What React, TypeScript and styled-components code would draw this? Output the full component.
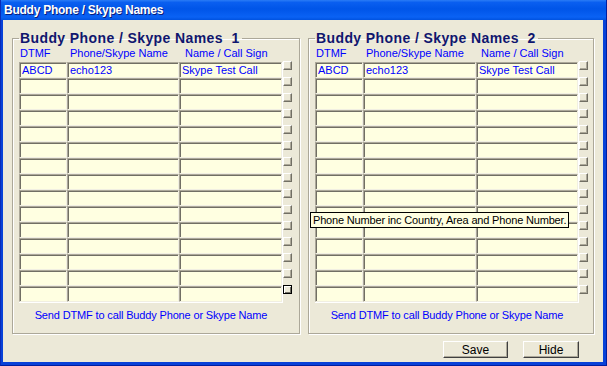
import React from 'react';
import styled, { createGlobalStyle } from 'styled-components';

const GlobalStyle = createGlobalStyle`
  html, body {
    margin: 0;
    padding: 0;
    background: #ece9d8;
  }
  body {
    font-family: "Liberation Sans", Arial, sans-serif;
  }
`;

const Window = styled.div`
  position: relative;
  width: 607px;
  height: 366px;
  box-sizing: border-box;
  display: flex;
  flex-direction: column;
  background: #0841d8;
  border-left: 1px solid #0a2bb8;
  border-right: 1px solid #001ea0;
  border-bottom: 1px solid #001ea0;
`;

const TitleBar = styled.div`
  height: 20px;
  flex: none;
  padding-left: 3px;
  display: flex;
  align-items: center;
  background: linear-gradient(
    180deg,
    #2a7cf6 0%,
    #0a5ff0 12%,
    #0055e8 45%,
    #0a62f4 85%,
    #0052e0 100%
  );
  color: #fff;
  font-weight: bold;
  font-size: 12px;
  letter-spacing: -0.25px;
  text-shadow: 1px 1px 0 #0a1c78;
`;

const Body = styled.div`
  flex: 1;
  margin: 0 3px 3px 2px;
  background: #ece9d8;
  padding: 10px 9px 0 9px;
  display: flex;
  flex-direction: column;
`;

const Groups = styled.div`
  display: flex;
  gap: 8px;
`;

const Group = styled.fieldset<{ $w: number }>`
  width: ${(p) => p.$w}px;
  box-sizing: border-box;
  margin: 0;
  padding: 0 6px 11px 6px;
  min-width: 0;
  border: 1px solid #aca899;
  box-shadow: inset 1px 1px 0 #fff, 1px 1px 0 #fff;
`;

const Legend = styled.legend`
  padding: 0 2px 0 1px;
  font-size: 14px;
  line-height: 16px;
  font-weight: bold;
  letter-spacing: 0.4px;
  color: #10166e;
  white-space: pre;
`;

const HeaderRow = styled.div`
  height: 16px;
  display: grid;
  grid-template-columns: 50px 115px auto;
  padding-left: 1px;
  font-size: 11px;
  line-height: 14px;
  color: #0000ff;
`;

const TableRow = styled.div`
  display: flex;
  align-items: flex-start;
`;

const Grid = styled.div<{ $cols: string }>`
  display: grid;
  grid-template-columns: ${(p) => p.$cols};
  grid-auto-rows: 16px;
  background: #ffffe1;
  border-right: 1px solid #fff;
  border-bottom: 1px solid #fff;
`;

const Cell = styled.div`
  box-sizing: border-box;
  border-top: 1px solid #aca899;
  border-left: 1px solid #aca899;
  border-right: 1px solid #f1efe2;
  border-bottom: 1px solid #f1efe2;
  box-shadow: inset 1px 1px 0 #716f64;
  padding-left: 2px;
  padding-top: 1px;
  font-size: 11px;
  line-height: 13px;
  color: #0000ff;
  white-space: nowrap;
  overflow: hidden;
`;

const SpinCol = styled.div`
  display: flex;
  flex-direction: column;
  width: 9px;
`;

const SpinSlot = styled.div`
  height: 16px;
`;

const SpinButton = styled.div<{ $focus?: boolean }>`
  box-sizing: border-box;
  width: 9px;
  height: 9px;
  margin-top: -1px;
  background: #ece9d8;
  border: 1px solid;
  border-color: ${(p) =>
    p.$focus ? '#000' : '#fff #716f64 #716f64 #fff'};
  box-shadow: ${(p) =>
    p.$focus ? 'inset 1px 1px 0 #fff, inset -1px -1px 0 #716f64' : 'inset -1px -1px 0 #aca899'};
`;

const Footnote = styled.div<{ $w: number }>`
  width: ${(p) => p.$w}px;
  margin-top: 6px;
  text-align: center;
  font-size: 11px;
  line-height: 13px;
  letter-spacing: -0.15px;
  color: #0000ff;
  white-space: nowrap;
`;

const ButtonBar = styled.div`
  display: flex;
  justify-content: flex-end;
  gap: 15px;
  padding-right: 15px;
  margin-top: 7px;
`;

const Button = styled.button<{ $w: number }>`
  width: ${(p) => p.$w}px;
  height: 17px;
  padding: 0;
  box-sizing: border-box;
  background: #ece9d8;
  border: 1px solid;
  border-color: #fff #404040 #404040 #fff;
  box-shadow: inset -1px -1px 0 #aca899;
  font-family: "Liberation Sans", Arial, sans-serif;
  font-size: 12px;
  line-height: 14px;
  color: #000;
`;

const Tooltip = styled.div`
  position: absolute;
  left: 309px;
  top: 212px;
  height: 16px;
  box-sizing: border-box;
  padding: 0 2px;
  border: 1px solid #000;
  background: #ffffe1;
  font-size: 11px;
  line-height: 14px;
  letter-spacing: -0.17px;
  color: #000;
  white-space: nowrap;
`;

const ROWS = 15;

type BuddyProps = {
  title: string;
  width: number;
  cols: string;
  gridWidth: number;
  focusLast?: boolean;
};

const BuddyGroup: React.FC<BuddyProps> = ({ title, width, cols, gridWidth, focusLast }) => {
  const rows = Array.from({ length: ROWS }, (_, i) =>
    i === 0 ? ['ABCD', 'echo123', 'Skype Test Call'] : ['', '', '']
  );

  return (
    <Group $w={width}>
      <Legend>{title}</Legend>
      <HeaderRow>
        <span>DTMF</span>
        <span>Phone/Skype Name</span>
        <span>Name / Call Sign</span>
      </HeaderRow>
      <TableRow>
        <Grid $cols={cols}>
          {rows.map((r, i) =>
            r.map((c, j) => <Cell key={`${i}-${j}`}>{c}</Cell>)
          )}
        </Grid>
        <SpinCol>
          {rows.map((_, i) => (
            <SpinSlot key={i}>
              <SpinButton $focus={focusLast && i === ROWS - 1} />
            </SpinSlot>
          ))}
        </SpinCol>
      </TableRow>
      <Footnote $w={gridWidth}>Send DTMF to call Buddy Phone or Skype Name</Footnote>
    </Group>
  );
};

const App: React.FC = () => {
  return (
    <>
      <GlobalStyle />
      <Window>
        <TitleBar>Buddy Phone / Skype Names</TitleBar>
        <Body>
          <Groups>
            <BuddyGroup
              title="Buddy Phone / Skype Names  1"
              width={288}
              cols="48px 112px 103px"
              gridWidth={264}
              focusLast
            />
            <BuddyGroup
              title="Buddy Phone / Skype Names  2"
              width={286}
              cols="48px 113px 102px"
              gridWidth={264}
            />
          </Groups>
          <ButtonBar>
            <Button $w={65}>Save</Button>
            <Button $w={56}>Hide</Button>
          </ButtonBar>
        </Body>
        <Tooltip>Phone Number inc Country, Area and Phone Number.</Tooltip>
      </Window>
    </>
  );
};

export default App;
